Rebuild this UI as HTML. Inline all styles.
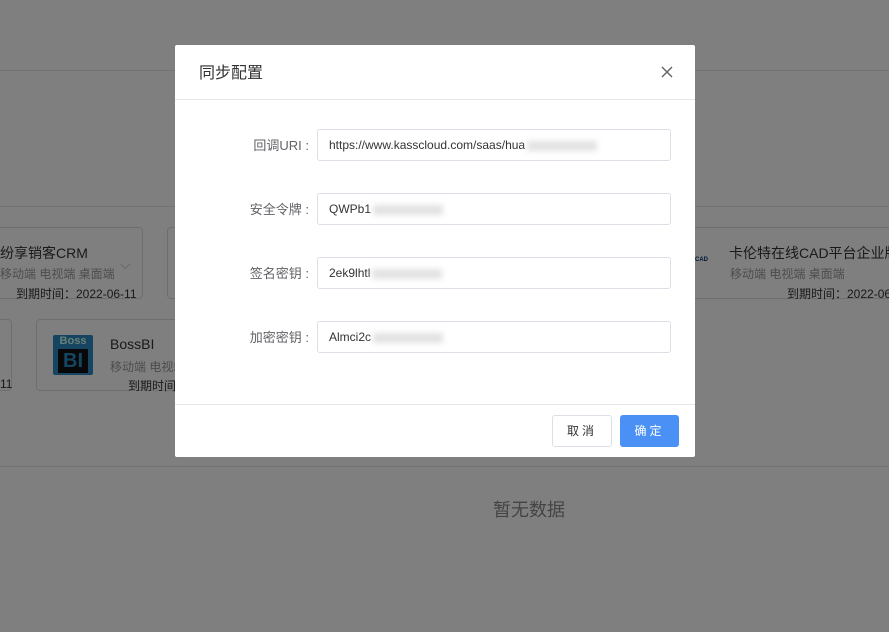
<!DOCTYPE html>
<html><head><meta charset="utf-8"><style>
*{margin:0;padding:0;box-sizing:border-box}
body{width:889px;height:632px;overflow:hidden;position:relative;background:#fff;font-family:"Liberation Sans","Noto Sans CJK SC",sans-serif}
.hl{position:absolute;left:0;right:0;height:1px;background:#e4e4e4}
.card{position:absolute;border:1px solid #ddd;border-radius:4px;background:#fff}
.t{position:absolute;white-space:nowrap}
.tag{color:#999;font-size:12px}
.ov{position:absolute;inset:0;background:rgba(0,0,0,.5)}
.dlg{position:absolute;left:175px;top:45px;width:520px;height:412px;background:#fff;border-radius:2px}
.lab{position:absolute;right:386px;font-size:13px;color:#606266;text-align:right;white-space:nowrap}
.inp{position:absolute;left:142px;width:354px;height:32px;border:1px solid #dcdfe6;border-radius:3px;font-size:12px;color:#333;padding-left:11px;line-height:30px}
.blur{display:inline-block;width:70px;height:10px;background:#e2e2e2;filter:blur(3px);vertical-align:middle;margin-left:2px}
</style></head><body>
<div class="hl" style="top:70px"></div>
<div class="hl" style="top:206px"></div>
<div class="hl" style="top:466px"></div>
<div class="card" style="left:-10px;top:227px;width:153px;height:72px"></div>
<div class="t" style="left:0;top:243px;font-size:14px;color:#333">纷享销客CRM</div>
<div class="t tag" style="left:0;top:265px">移动端 电视端 桌面端</div>
<div class="t" style="left:120px;top:256px;color:#bbb;font-size:14px">⌵</div>
<div class="t" style="left:16px;top:285px;font-size:12px;color:#333">到期时间：2022-06-11</div>
<div class="card" style="left:167px;top:227px;width:40px;height:72px"></div>
<div class="card" style="left:-10px;top:319px;width:22px;height:72px"></div>
<div class="t" style="left:0;top:377px;font-size:12px;color:#333">11</div>
<div class="card" style="left:36px;top:319px;width:160px;height:72px"></div>
<div style="position:absolute;left:53px;top:335px;width:40px;height:40px;background:#2a8bc0;border-radius:2px">
<div style="color:#cfe;font-size:11px;font-weight:bold;text-align:center;line-height:13px">Boss</div>
<div style="margin:1px 5px;height:24px;background:#111;color:#2a8bc0;font-size:20px;font-weight:bold;line-height:24px;text-align:center">BI</div></div>
<div class="t" style="left:110px;top:336px;font-size:14px;color:#333">BossBI</div>
<div class="t tag" style="left:110px;top:358px">移动端 电视端</div>
<div class="t" style="left:128px;top:377px;font-size:12px;color:#333">到期时间</div>
<div class="card" style="left:690px;top:227px;width:220px;height:72px;border-left:none"></div>
<div class="t" style="left:695px;top:257px;font-size:6px;color:#036;font-weight:bold">CAD</div>
<div class="t" style="left:729px;top:243px;font-size:14px;color:#333">卡伦特在线CAD平台企业版</div>
<div class="t tag" style="left:730px;top:265px">移动端 电视端 桌面端</div>
<div class="t" style="left:787px;top:285px;font-size:12px;color:#333">到期时间：2022-06-11</div>
<div class="t" style="left:493px;top:496px;font-size:18px;color:#888">暂无数据</div>
<div class="ov"></div>
<div class="dlg">
<div class="t" style="left:24px;top:14px;font-size:16px;color:#303133">同步配置</div>
<svg style="position:absolute;left:486px;top:21px" width="12" height="12" viewBox="0 0 12 12"><path d="M1 1L11 11M11 1L1 11" stroke="#606266" stroke-width="1.4"/></svg>
<div style="position:absolute;left:0;right:0;top:54px;height:1px;background:#e6e6e6"></div>
<div class="lab" style="top:90px">回调URI :</div>
<div class="inp" style="top:84px">https://www.kasscloud.com/saas/hua<span class="blur"></span></div>
<div class="lab" style="top:154px">安全令牌 :</div>
<div class="inp" style="top:148px">QWPb1<span class="blur"></span></div>
<div class="lab" style="top:218px">签名密钥 :</div>
<div class="inp" style="top:212px">2ek9lhtl<span class="blur"></span></div>
<div class="lab" style="top:282px">加密密钥 :</div>
<div class="inp" style="top:276px">Almci2c<span class="blur"></span></div>
<div style="position:absolute;left:0;right:0;top:359px;height:1px;background:#e6e6e6"></div>
<div style="position:absolute;left:377px;top:370px;width:60px;height:32px;border:1px solid #dcdfe6;border-radius:3px;font-size:12px;color:#333;text-align:center;line-height:30px;letter-spacing:3px">取消</div>
<div style="position:absolute;left:445px;top:370px;width:59px;height:32px;background:#4a90f5;border-radius:3px;font-size:12px;color:#fff;text-align:center;line-height:32px;letter-spacing:3px">确定</div>
</div>
</body></html>
